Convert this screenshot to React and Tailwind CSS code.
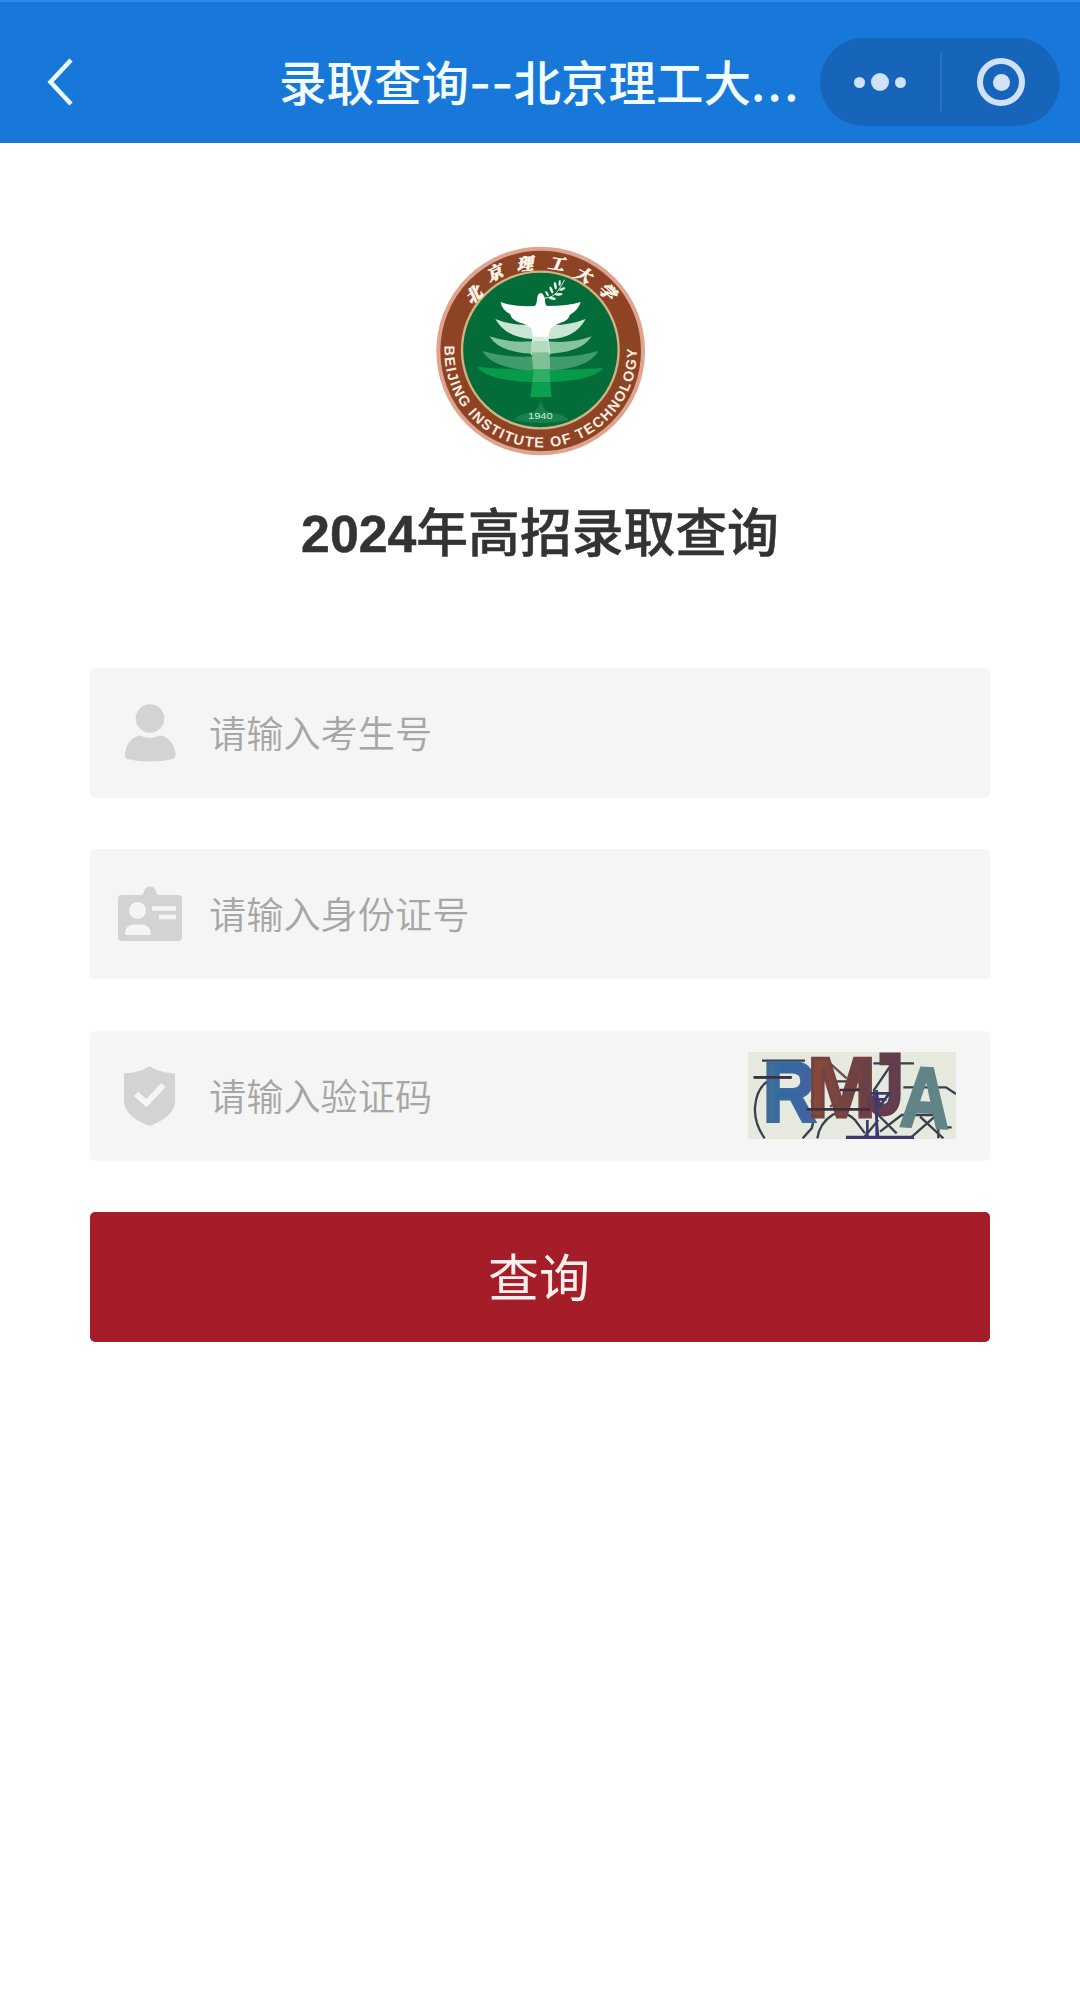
const FONT = "font-['Liberation_Sans','Noto_Sans_CJK_SC',sans-serif]";

// Calligraphic characters along the top of the school badge
const badgeChars = [
  { char: "北", x: 149, y: 177, rotate: -40 },
  { char: "京", x: 213, y: 113, rotate: -24 },
  { char: "理", x: 304, y: 86, rotate: -6 },
  { char: "工", x: 399, y: 86, rotate: 8 },
  { char: "大", x: 479, y: 121, rotate: 27 },
  { char: "学", x: 550, y: 172, rotate: 45 },
];

const SchoolBadge = () => (
  <svg viewBox="0 0 690 690" className="h-[230px] w-[230px]">
    <circle cx="347" cy="348" r="307" fill="#8e4324" stroke="#dea48f" strokeWidth="12" />
    <circle cx="346" cy="345" r="235" fill="#046c39" stroke="#d3b382" strokeWidth="7" />

    {/* Tree layers */}
    <path d="M157 396 Q346 412 534 399 Q505 440 346 442 Q190 440 157 396Z" fill="#069a4b" />
    <path d="M173 348 Q250 372 346 362 Q440 372 520 348 Q490 405 346 408 Q200 404 173 348Z" fill="#3f9c69" />
    <path d="M194 304 Q260 328 346 316 Q430 330 500 304 Q470 356 346 358 Q222 356 194 304Z" fill="#87c39d" />
    <path d="M211 252 Q270 276 346 268 Q420 276 482 252 Q450 312 370 312 L320 312 Q240 306 211 252Z" fill="#cbe5d3" />

    {/* Trunk */}
    <path d="M322 303 H370 L376 360 H318Z" fill="#d9eee0" />
    <path d="M324 318 H369 L373 352 H318Z" fill="#b4dbc1" />
    <path d="M320 352 H373 L376 402 H324Z" fill="#7fc097" />
    <path d="M326 402 H374 L376 442 H322Z" fill="#2fae66" />
    <path d="M322 442 H376 L379 486 H316Z" fill="#09a04e" />
    <path d="M347 486 Q350 523 371 531 Q418 538 431 556 Q347 572 266 556 Q280 535 325 531 Q345 520 347 486Z" fill="#16824b" />

    {/* Dove */}
    <path
      d="M227 201 Q265 216 329 213 Q336 207 337 185 Q340 174 349 174 Q356 177 360 191 Q359 208 366 213 Q430 213 467 201 Q459 227 435 239 Q429 258 405 264 Q387 270 376 282 L370 305 H323 L320 282 Q303 265 285 263 Q261 257 255 237 Q231 225 227 201Z"
      fill="#ffffff"
    />

    {/* Olive branch */}
    <path d="M356 190 Q385 188 397 170 Q408 155 419 134" fill="none" stroke="#d8eadc" strokeWidth="3" />
    <g fill="#e4f2e7">
      <ellipse cx="366" cy="176" rx="9" ry="3.5" transform="rotate(60 366 176)" />
      <ellipse cx="379" cy="165" rx="11" ry="4" transform="rotate(68 379 165)" />
      <ellipse cx="391" cy="152" rx="11" ry="4" transform="rotate(80 391 152)" />
      <ellipse cx="404" cy="144" rx="9" ry="3.5" transform="rotate(95 404 144)" />
      <ellipse cx="382" cy="190" rx="11" ry="4" transform="rotate(12 382 190)" />
      <ellipse cx="401" cy="178" rx="12" ry="4" transform="rotate(-4 401 178)" />
      <ellipse cx="412" cy="162" rx="10" ry="4" transform="rotate(-22 412 162)" />
    </g>

    <text x="346" y="552" textAnchor="middle" textLength="74" lengthAdjust="spacingAndGlyphs" fontSize="27" fill="#d5eddc" className={FONT}>
      1940
    </text>

    {badgeChars.map((item) => (
      <text
        key={item.char}
        textAnchor="middle"
        dy="18"
        fontSize="49"
        fontWeight="900"
        fill="#fff6ec"
        stroke="#fff6ec"
        strokeWidth="2"
        transform={`translate(${item.x} ${item.y}) rotate(${item.rotate}) skewX(-14)`}
        className="font-['Noto_Serif_CJK_SC','Noto_Sans_CJK_SC',serif]"
      >
        {item.char}
      </text>
    ))}

    <path id="badge-arc" d="M59 328 A288.7 288.7 0 1 0 635 328" fill="none" />
    <text fontSize="43" fontWeight="700" fill="#fdeee0" className={FONT}>
      <textPath href="#badge-arc" startOffset="4" textLength="930">BEIJING INSTITUTE OF TECHNOLOGY</textPath>
    </text>
  </svg>
);

const UserIcon = () => (
  <svg viewBox="0 0 64 64" className="h-16 w-16" fill="#d3d3d3">
    <circle cx="32" cy="17.5" r="14.3" />
    <path d="M19 35 Q21 34 23.5 35 Q32 39 40.5 35 Q43 34 45 35 Q56 40 57.5 52 Q58 56 55 58 Q44 60.5 32 60.5 Q20 60.5 9 58 Q6.5 56 7 52 Q8.5 40 19 35Z" />
  </svg>
);

const IdCardIcon = () => (
  <svg viewBox="0 0 64 64" className="h-16 w-16">
    <path d="M4 13 H23 Q26 12 26.5 8 Q28 4.5 32 4.5 Q36 4.5 37.5 8 Q38 12 41 13 H60 Q64 13 64 17 V55 Q64 59 60 59 H4 Q0 59 0 55 V17 Q0 13 4 13Z" fill="#d3d3d3" />
    <circle cx="19.5" cy="28.5" r="8.5" fill="#f5f5f5" />
    <path d="M14 42.5 H25 Q32 43.5 33 51 Q33 53 31 53 H9 Q7 53 7 51 Q8 43.5 14 42.5Z" fill="#f5f5f5" />
    <path d="M34 26.5 H58 M41 35 H58" stroke="#f5f5f5" strokeWidth="4.5" />
  </svg>
);

const ShieldIcon = () => (
  <svg viewBox="0 0 64 64" className="h-16 w-16">
    <path d="M31.5 2 Q41 9 57 9.5 V39 Q55 53 31.5 62 Q8 53 6 39 V9.5 Q22 9 31.5 2Z" fill="#d3d3d3" />
    <path d="M18 30 L28.5 39 L45.5 21" fill="none" stroke="#f5f5f5" strokeWidth="6" />
  </svg>
);

const Captcha = () => (
  <svg viewBox="54 96 624 261" preserveAspectRatio="none" className="h-[87px] w-[208px]">
    <defs>
      <linearGradient id="cap-r" x1="0" x2="1">
        <stop offset="0" stopColor="#4f7684" />
        <stop offset="0.35" stopColor="#2f69a8" />
        <stop offset="1" stopColor="#4a5f9e" />
      </linearGradient>
      <linearGradient id="cap-m" x1="0" x2="1">
        <stop offset="0" stopColor="#8d4a35" />
        <stop offset="1" stopColor="#633f4b" />
      </linearGradient>
    </defs>
    <rect x="54" y="96" width="624" height="261" fill="#e6e9de" />
    <g fill="none" stroke="#3b3f4e" strokeWidth="7">
      <path d="M96 122 H225 M70 172 H185 M230 152 H300 M430 130 H552 M320 184 H390 M520 202 H648 L678 222" />
      <path d="M104 355 Q72 310 75 262 Q80 200 118 182" />
      <path d="M218 355 L245 325 Q255 300 245 240" />
      <path d="M262 355 Q268 310 308 284 Q350 272 375 300 L405 340" />
      <path d="M478 142 L432 210 L445 355 M400 355 L445 300" />
      <path d="M445 285 L500 340 M540 355 L620 285 H515 L450 335 M570 290 L640 355 M665 322 H625 V355" />
    </g>
    <path d="M300 130 L350 175 M300 260 L385 205" fill="none" stroke="#6d5052" strokeWidth="7" />
    <g fontWeight="700" strokeWidth="9" className={FONT}>
      <text x="98" y="302" fontSize="256" textLength="161" lengthAdjust="spacingAndGlyphs" fill="url(#cap-r)" stroke="#3d6a9e">R</text>
      <text x="231" y="290" fontSize="256" textLength="207" lengthAdjust="spacingAndGlyphs" fill="url(#cap-m)" stroke="#744340">M</text>
      <text x="410" y="282" fontSize="260" textLength="112" lengthAdjust="spacingAndGlyphs" fill="#643d4d" stroke="#643d4d">J</text>
      <text x="0" y="0" fontSize="256" textLength="148" lengthAdjust="spacingAndGlyphs" fill="#608487" stroke="#608487" transform="translate(508 317) rotate(3)">A</text>
    </g>
    <g fill="none" stroke="#3c3970" strokeWidth="8">
      <path d="M348 353 H552" strokeWidth="12" />
      <path d="M420 220 H478 L450 258 H432 M430 238 H470 M440 210 V355 M412 300 V350" />
      <path d="M72 172 H185 M230 268 H420 M330 210 H390" stroke="#3b3040" />
    </g>
  </svg>
);

const fields = [
  { name: "examNo", placeholder: "请输入考生号", icon: <UserIcon /> },
  { name: "idNo", placeholder: "请输入身份证号", icon: <IdCardIcon /> },
  { name: "captcha", placeholder: "请输入验证码", icon: <ShieldIcon />, extra: <Captcha /> },
];

const App = () => {
  return (
    <div className={`min-h-[2016px] w-[1080px] bg-white ${FONT}`}>
      {/* Mini program navigation bar */}
      <header className="flex h-[143px] items-center border-t-2 border-[#2f8bea] bg-[#1878da] pt-[19px] pr-5 pl-[45px]">
        <svg viewBox="0 0 30 50" className="h-[50px] w-[30px]" fill="none" stroke="#ecfaff" strokeWidth="4.5">
          <path d="M26 3 L5.5 25 L26 47" />
        </svg>
        <h1 className="ml-[204px] w-[541px] font-['Noto_Sans_CJK_SC',sans-serif] text-[47.5px] leading-none font-medium whitespace-nowrap text-[#f2fcff]">
          录取查询<span className="font-['Inter',sans-serif] text-[48px]">--</span>北京理工大<span className="tracking-[2.5px]">...</span>
        </h1>
        <div className="flex h-[88px] w-[240px] items-center rounded-full bg-[#1765ba]">
          <div className="flex w-[120px] items-center justify-center gap-[6px]">
            <span className="h-[11px] w-[11px] rounded-full bg-[#cfe2fa]" />
            <span className="h-[18px] w-[18px] rounded-full bg-[#cfe2fa]" />
            <span className="h-[11px] w-[11px] rounded-full bg-[#cfe2fa]" />
          </div>
          <span className="h-[58px] w-[2px] bg-[#2b74c6]" />
          <div className="flex flex-1 items-center justify-center">
            <span className="flex h-12 w-12 items-center justify-center rounded-full border-[6px] border-[#cfe2fa]">
              <span className="h-[17px] w-[17px] rounded-full bg-[#d4e2f6]" />
            </span>
          </div>
        </div>
      </header>

      {/* Query form */}
      <main className="flex flex-col items-center px-[90px] pt-[92px]">
        <SchoolBadge />
        <h2 className="mt-[30px] text-[51.8px] leading-[78px] font-medium text-[#333333] [-webkit-text-stroke:0.5px_#333333]">
          <span className="font-bold">2024</span>年高招录取查询
        </h2>

        <form className="mt-[95px] flex w-full flex-col gap-[51.4px]">
          {fields.map((field) => (
            <label key={field.name} className="flex h-[130px] items-center rounded-[5px] bg-[#f5f5f5] pr-[34px] pl-7">
              {field.icon}
              <input
                name={field.name}
                placeholder={field.placeholder}
                className="ml-[27px] h-full min-w-0 flex-1 bg-transparent pb-[2px] font-['Noto_Sans_CJK_SC',sans-serif] text-[37.2px] font-[350] outline-none placeholder:text-[#a6a6a6]"
              />
              {field.extra}
            </label>
          ))}
          <button type="button" className="h-[130px] rounded-[5px] bg-[#a51d28] pr-[2px] pb-1 font-['Noto_Sans_CJK_SC',sans-serif] text-[51px] font-normal text-[#fff0ee]">
            查询
          </button>
        </form>
      </main>
    </div>
  );
};

export default App;
